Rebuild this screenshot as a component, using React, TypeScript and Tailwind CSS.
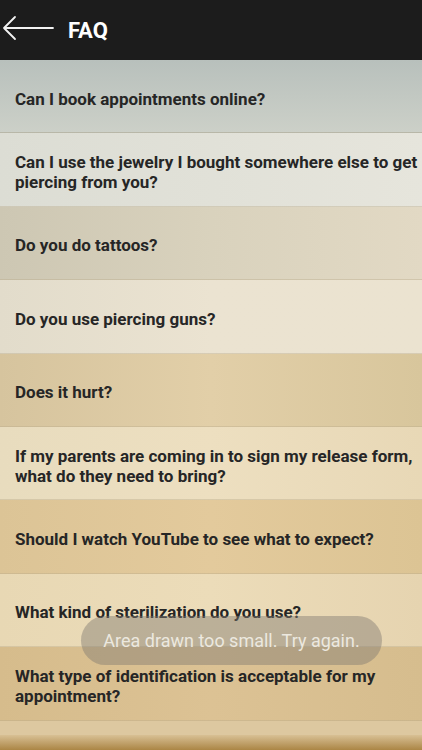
const questions: { text: string; bg: string }[] = [
  { text: 'Can I book appointments online?', bg: 'bg-linear-to-b from-[#b8c0bc] to-[#ccd0c8]' },
  { text: 'Can I use the jewelry I bought somewhere else to get piercing from you?', bg: 'bg-linear-to-r from-[#dcddd4] to-[#e6e5dc]' },
  { text: 'Do you do tattoos?', bg: 'bg-linear-to-r from-[#cdc7b3] via-[#d9d2bd] to-[#e2d9c4]' },
  { text: 'Do you use piercing guns?', bg: 'bg-linear-to-r from-[#e2dccb] via-[#ebe3d1] to-[#ebe3d0]' },
  { text: 'Does it hurt?', bg: 'bg-linear-to-r from-[#d6c49e] via-[#e2cfa8] to-[#d8c69c]' },
  { text: 'If my parents are coming in to sign my release form, what do they need to bring?', bg: 'bg-linear-to-r from-[#e8dcbe] via-[#eddfc0] to-[#e8d8b6]' },
  { text: 'Should I watch YouTube to see what to expect?', bg: 'bg-linear-to-r from-[#dcc496] via-[#e3ca9c] to-[#dcc494]' },
  { text: 'What kind of sterilization do you use?', bg: 'bg-linear-to-r from-[#e8d8b4] via-[#ecdcb9] to-[#e6d4b0]' },
  { text: 'What type of identification is acceptable for my appointment?', bg: 'bg-linear-to-r from-[#d6bc8c] via-[#dcc294] to-[#d6bd8e]' },
];

export default function App() {
  return (
    <div className="relative h-[750px] w-[422px] overflow-hidden bg-[#d8c29a] font-['Roboto',sans-serif]">
      <header className="flex h-[60px] items-center bg-[#1c1c1c]">
        <svg width="60" height="60" viewBox="0 0 60 60" className="shrink-0">
          <path d="M4 28 H53 M15 17 L4 28 L15 39" fill="none" stroke="#f2f2f2" strokeWidth="1.8" strokeLinecap="round" strokeLinejoin="round" />
        </svg>
        <h1 className="ml-[8px] text-[22px] font-bold text-white">FAQ</h1>
      </header>

      <div className="flex flex-col">
        {questions.map((q) => (
          <div
            key={q.text}
            className={`flex h-[73.4px] items-center border-b border-[#b9a98a]/40 pl-[15px] pr-[2px] pt-[5px] ${q.bg}`}
          >
            <p className="text-[17px] font-bold leading-[20px] text-[#262626]">{q.text}</p>
          </div>
        ))}
        <div className="h-[14px] bg-[#ddc8a0]" />
        <div className="h-[16px] bg-linear-to-b from-[#d8c094] to-[#a8823f]" />
      </div>

      <div className="absolute left-[81px] top-[616px] flex h-[49px] w-[301px] items-center justify-center rounded-full bg-[#807a70]/45">
        <span className="text-[18px] text-[#ece8df]">Area drawn too small. Try again.</span>
      </div>
    </div>
  );
}
